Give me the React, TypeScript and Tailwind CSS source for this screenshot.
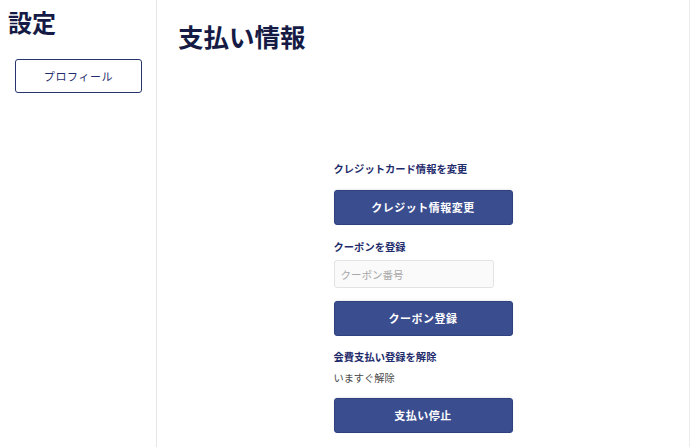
import React from 'react'

const Label = ({ children, className = '' }: { children: React.ReactNode; className?: string }) => (
  <p className={`text-[10.3px] font-bold leading-[14px] text-[#1f2c6c] ${className}`}>{children}</p>
)

const ActionButton = ({ children, className = '' }: { children: React.ReactNode; className?: string }) => (
  <button
    className={`block h-[35px] w-[179px] rounded-[3px] border border-[#2f417f] bg-[#3a4d8f] text-[11px] font-bold tracking-[0.5px] text-white shadow-[0_-1px_2px_rgba(0,0,0,0.08)] ${className}`}
  >
    {children}
  </button>
)

const App = () => {
  return (
    <div className="flex h-[447px] w-[690px] overflow-hidden bg-white font-['Noto_Sans_CJK_JP','Noto_Sans',sans-serif]">
      <aside className="w-[157px] shrink-0 border-r border-[#e6e6e6]">
        <h1 className="pl-2 pt-[7px] text-[24px] font-bold leading-[30px] text-[#151b44]">設定</h1>
        <button className="ml-[15px] mt-[22px] h-[34px] w-[127px] rounded-[3px] border border-[#26356f] text-[11px] tracking-[0.6px] text-[#1f2c6c]">
          プロフィール
        </button>
      </aside>
      <main className="flex-1 border-r border-[#ececec]">
        <h2 className="pl-[21px] pt-[20px] text-[25.5px] font-bold leading-[32px] text-[#151b44]">支払い情報</h2>
        <div className="mx-auto mt-[110px] w-[179px]">
          <Label>クレジットカード情報を変更</Label>
          <ActionButton className="mt-[14px]">クレジット情報変更</ActionButton>
          <Label className="mt-[15px]">クーポンを登録</Label>
          <input
            className="mt-[6px] block h-[28px] w-[160px] rounded-[3px] border border-[#e3e3e3] bg-[#fafafa] px-[6px] text-[10.5px] text-[#333] outline-none placeholder:text-[#a9a9a9]"
            placeholder="クーポン番号"
          />
          <ActionButton className="mt-[13px]">クーポン登録</ActionButton>
          <Label className="mt-[14px]">会費支払い登録を解除</Label>
          <p className="mt-[7px] text-[10.2px] leading-[14px] text-[#4a4a4a]">いますぐ解除</p>
          <ActionButton className="mt-[13px]">支払い停止</ActionButton>
        </div>
      </main>
    </div>
  )
}

export default App
